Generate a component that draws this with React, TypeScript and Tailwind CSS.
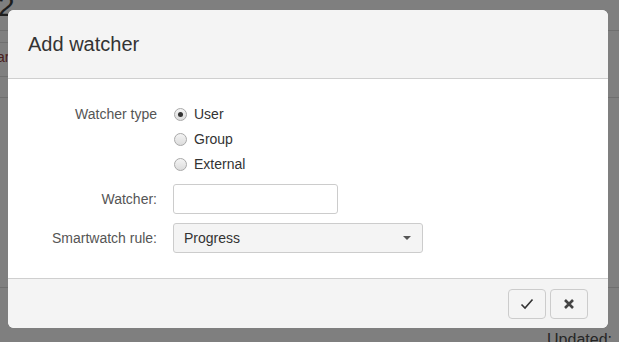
import React from 'react';

type RadioProps = { label: string; checked?: boolean };

function Radio({ label, checked }: RadioProps) {
  return (
    <label className="flex h-[25px] items-center gap-[7px] text-[14px] text-[#333]">
      <span className="ml-[1px] flex h-[13px] w-[13px] items-center justify-center rounded-full border border-[#a9a9a9] bg-gradient-to-b from-[#f4f4f4] to-[#dcdcdc]">
        {checked && <span className="h-[5px] w-[5px] rounded-full bg-[#333]" />}
      </span>
      {label}
    </label>
  );
}

export default function App() {
  return (
    <div className="relative h-[342px] w-[619px] overflow-hidden bg-[#7f7f7f] font-['Liberation_Sans',Arial,sans-serif]">
      {/* page behind the backdrop */}
      <div className="h-[30px] overflow-hidden">
        <div className="-mt-[9px] -ml-[27px] whitespace-nowrap text-[30px] leading-[30px] text-[#1e1e1e]">1.2</div>
      </div>
      <div className="h-px bg-[#6f6f6f]" />
      <div className="flex h-[66px] flex-col">
        <div className="mt-[11px] h-px w-[8px] bg-[#6f6f6f]" />
        <div className="-ml-[3px] mt-[6px] text-[14px] leading-[16px] text-[#4a2020]">ar</div>
        <div className="mt-[11px] h-px w-[8px] bg-[#6f6f6f]" />
      </div>
      <div className="h-px bg-[#6f6f6f]" />
      <div className="h-[189px]" />
      <div className="h-px bg-[#6f6f6f]" />
      <div className="mt-[43px] whitespace-nowrap pr-[7px] text-right text-[16px] leading-[18px] text-[#262626]">Updated:</div>

      {/* modal */}
      <div className="absolute left-[8px] top-[10px] flex w-[600px] flex-col overflow-hidden rounded-[6px] bg-white">
        <div className="flex h-[69px] items-center border-b border-[#cfcfcf] bg-[#f4f4f4] px-5 text-[20px] text-[#333]">
          Add watcher
        </div>
        <div className="grid grid-cols-[149px_1fr] gap-x-4 pt-[23px] pb-[25px] text-[14px]">
          <div className="flex h-[25px] items-center justify-end text-[#555]">Watcher type</div>
          <div className="flex flex-col">
            <Radio label="User" checked />
            <Radio label="Group" />
            <Radio label="External" />
          </div>

          <div className="mt-[7px] flex h-[30px] items-center justify-end text-[#555]">Watcher:</div>
          <div className="mt-[7px]">
            <input className="h-[30px] w-[165px] rounded-[3px] border border-[#ccc] px-2 outline-none" />
          </div>

          <div className="mt-[9px] flex h-[30px] items-center justify-end text-[#555]">Smartwatch rule:</div>
          <div className="mt-[9px]">
            <div className="flex h-[30px] w-[250px] items-center justify-between rounded-[3px] border border-[#ccc] bg-[#f4f4f4] pl-[10px] pr-[11px] text-[#333]">
              <span>Progress</span>
              <span className="h-0 w-0 border-x-[4px] border-t-[4px] border-x-transparent border-t-[#555]" />
            </div>
          </div>
        </div>
        <div className="flex h-[50px] justify-end gap-1 border-t border-[#cfcfcf] bg-[#f4f4f4] px-5 pt-[10px]">
          <button className="flex h-[30px] w-[38px] items-center justify-center rounded-[4px] border border-[#ccc] bg-[#f4f4f4]">
            <svg width="14" height="12" viewBox="0 0 14 12" fill="none">
              <path d="M1.5 6.5 L5 10 L12.5 1.5" stroke="#333" strokeWidth="1.6" />
            </svg>
          </button>
          <button className="flex h-[30px] w-[38px] items-center justify-center rounded-[4px] border border-[#ccc] bg-[#f4f4f4]">
            <svg width="12" height="12" viewBox="0 0 12 12" fill="none">
              <path d="M2 2 L10 10 M10 2 L2 10" stroke="#444" strokeWidth="2.6" />
            </svg>
          </button>
        </div>
      </div>
    </div>
  );
}
